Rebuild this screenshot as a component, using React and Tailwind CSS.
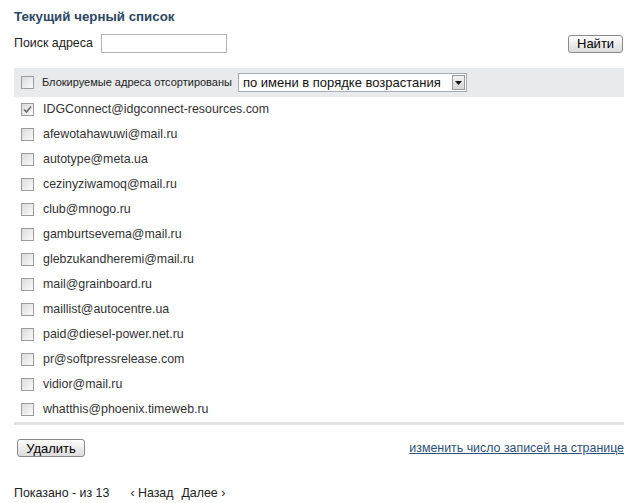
const emails = [
  'IDGConnect@idgconnect-resources.com',
  'afewotahawuwi@mail.ru',
  'autotype@meta.ua',
  'cezinyziwamoq@mail.ru',
  'club@mnogo.ru',
  'gamburtsevema@mail.ru',
  'glebzukandheremi@mail.ru',
  'mail@grainboard.ru',
  'maillist@autocentre.ua',
  'paid@diesel-power.net.ru',
  'pr@softpressrelease.com',
  'vidior@mail.ru',
  'whatthis@phoenix.timeweb.ru',
];

function Box({ checked }) {
  return (
    <div className="w-[13px] h-[13px] border border-[#9c9c9c] bg-gradient-to-br from-[#dcdcdc] to-[#fafafa] flex items-center justify-center shrink-0">
      {checked && (
        <svg width="9" height="9" viewBox="0 0 9 9">
          <path d="M1 4.5 L3.5 7 L8 1.5" fill="none" stroke="#6b6b6b" strokeWidth="1.6" />
        </svg>
      )}
    </div>
  );
}

function Btn({ children, className = '' }) {
  return (
    <button className={`h-[18px] px-2 border border-[#8a8a8a] rounded-[3px] bg-gradient-to-b from-[#fdfdfd] to-[#dcdcdc] text-[13px] leading-none text-black ${className}`}>
      {children}
    </button>
  );
}

export default function App() {
  return (
    <div className="w-[638px] h-[503px] bg-white text-[#333] font-['Liberation_Sans',Arial,sans-serif] text-[12.4px] px-[14px] pt-[8px]">
      <h1 className="text-[13.3px] font-bold text-[#2d4763] leading-[18px]">Текущий черный список</h1>

      <div className="flex items-center mt-[8px] h-[19px] pr-[1px]">
        <span className="text-[12.4px] text-[#222]">Поиск адреса</span>
        <input className="ml-[8px] w-[126px] h-[19px] border border-[#b5b5b5] bg-white" />
        <Btn className="ml-auto w-[55px]">Найти</Btn>
      </div>

      <div className="mt-[15px] h-[29px] bg-[#e9eaec] flex items-center pl-[7px]">
        <Box />
        <span className="ml-[8px] text-[11px] text-[#222]">Блокируемые адреса отсортированы</span>
        <div className="ml-[6px] w-[229px] h-[19px] border border-[#a5acb2] bg-white flex items-center">
          <span className="flex-1 pl-[4px] text-[13px] text-[#111] leading-none">по имени в порядке возрастания</span>
          <div className="w-[13px] h-[15px] mr-[1px] border border-[#9a9a9a] bg-gradient-to-b from-[#f4f4f4] to-[#d6d6d6] flex items-center justify-center">
            <svg width="7" height="4" viewBox="0 0 7 4">
              <path d="M0 0 H7 L3.5 4 Z" fill="#111" />
            </svg>
          </div>
        </div>
      </div>

      <div className="flex flex-col">
        {emails.map((e, i) => (
          <div key={e} className="h-[25px] flex items-center pl-[7px]">
            <Box checked={i === 0} />
            <span className="ml-[9px] text-[12.4px] text-[#333]">{e}</span>
          </div>
        ))}
      </div>

      <div className="h-[3px] bg-[#e3e3e3]" />

      <div className="flex items-center justify-between mt-[14px] pl-[3px]">
        <Btn className="w-[68px]">Удалить</Btn>
        <a href="#" className="text-[12.4px] text-[#2e4f79] underline">изменить число записей на странице</a>
      </div>

      <div className="flex items-center mt-[26px] text-[12.4px] text-[#222]">
        <span>Показано - из 13</span>
        <span className="ml-[21px]">‹ Назад</span>
        <span className="ml-[8px]">Далее ›</span>
      </div>
    </div>
  );
}
